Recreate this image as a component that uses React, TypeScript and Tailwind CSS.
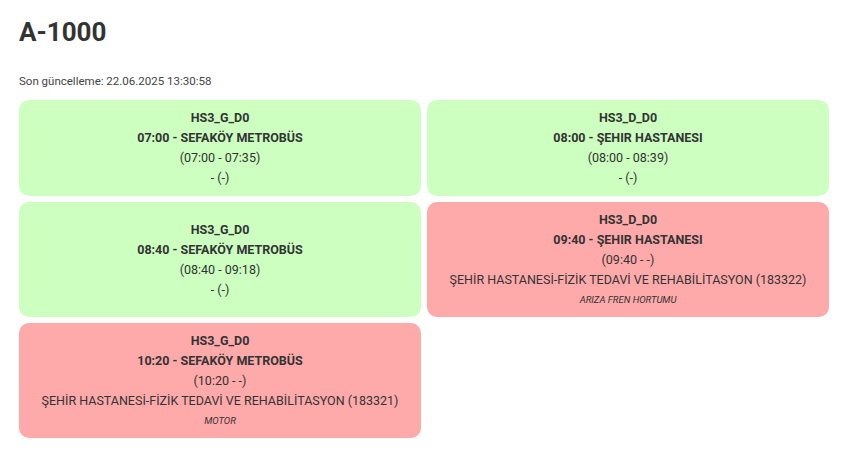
type Trip = {
  id: string;
  route: string;
  title: string;
  range: string;
  place: string;
  note?: string;
  failed: boolean;
};

const trips: Trip[] = [
  { id: '1', route: 'HS3_G_D0', title: '07:00 - SEFAKÖY METROBÜS', range: '(07:00 - 07:35)', place: '- (-)', failed: false },
  { id: '2', route: 'HS3_D_D0', title: '08:00 - ŞEHIR HASTANESI', range: '(08:00 - 08:39)', place: '- (-)', failed: false },
  { id: '3', route: 'HS3_G_D0', title: '08:40 - SEFAKÖY METROBÜS', range: '(08:40 - 09:18)', place: '- (-)', failed: false },
  {
    id: '4',
    route: 'HS3_D_D0',
    title: '09:40 - ŞEHIR HASTANESI',
    range: '(09:40 - -)',
    place: 'ŞEHİR HASTANESİ-FİZİK TEDAVİ VE REHABİLİTASYON (183322)',
    note: 'ARIZA FREN HORTUMU',
    failed: true,
  },
  {
    id: '5',
    route: 'HS3_G_D0',
    title: '10:20 - SEFAKÖY METROBÜS',
    range: '(10:20 - -)',
    place: 'ŞEHİR HASTANESİ-FİZİK TEDAVİ VE REHABİLİTASYON (183321)',
    note: 'MOTOR',
    failed: true,
  },
];

// red when the trip broke down, green otherwise
function TripCard({ trip }: { trip: Trip }) {
  return (
    <div
      className={
        trip.failed
          ? 'flex flex-col justify-center rounded-[10px] bg-[#ffaaaa] px-2 py-2 text-center'
          : 'flex flex-col justify-center rounded-[10px] bg-[#ccffc0] px-2 py-2 text-center'
      }
    >
      <p className="text-[12.5px] font-bold leading-[20px]">{trip.route}</p>
      <p className="text-[12.5px] font-bold leading-[20px]">{trip.title}</p>
      <p className="text-[12.5px] leading-[20px]">{trip.range}</p>
      <p className="whitespace-nowrap text-[12.5px] leading-[20px]">{trip.place}</p>
      {trip.note && <p className="text-[9.5px] italic leading-[19px]">{trip.note}</p>}
    </div>
  );
}

export default function App() {
  return (
    <div className="min-h-screen bg-white px-[19px] pt-[14px] text-[#333] font-['Roboto','Liberation_Sans',sans-serif]">
      <h1 className="text-[26px] font-bold leading-[36px]">A-1000</h1>
      <p className="mt-[23px] text-[11.5px] leading-[16px] text-[#444]">Son güncelleme: 22.06.2025 13:30:58</p>
      <div className="mt-[11px] grid w-[810px] grid-cols-2 gap-[6px]">
        {trips.map((trip) => (
          <TripCard key={trip.id} trip={trip} />
        ))}
      </div>
    </div>
  );
}
